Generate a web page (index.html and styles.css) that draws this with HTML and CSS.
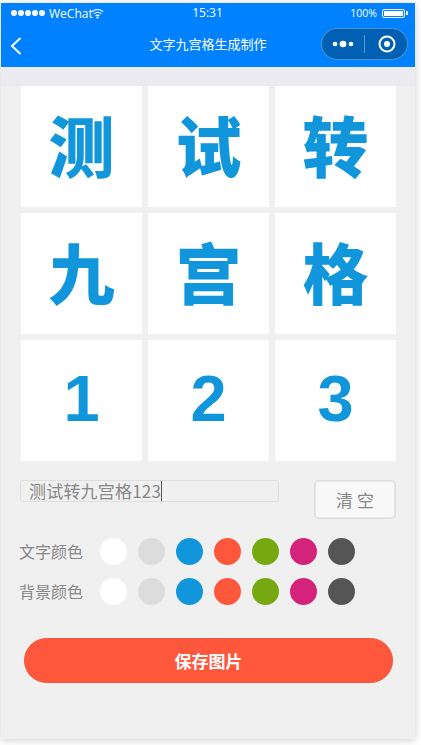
FILE: index.html
```html
<!DOCTYPE html>
<html lang="zh">
<head>
<meta charset="utf-8">
<title>文字九宫格生成制作</title>
<link rel="stylesheet" href="styles.css">
</head>
<body>
<div class="phone">
  <header class="header">
    <div class="status">
      <div class="status-left">
        <span class="dots"><i></i><i></i><i></i><i></i><i></i></span>
        <span class="carrier">WeChat</span>
        <svg class="wifi" width="11" height="9" viewBox="0 0 11 9"><path d="M.6 3Q5.500-1 10.400 3M2.200 4.800Q5.500 2 8.800 4.800M3.800 6.500Q5.500 5.200 7.200 6.500" fill="none" stroke="#fff" stroke-width="1"/><circle cx="5.500" cy="8" r="1" fill="#fff"/></svg>
      </div>
      <div class="time">15:31</div>
      <div class="status-right">
        <span class="pct">100%</span>
        <span class="battery"><span class="battery-fill"></span></span>
        <span class="battery-tip"></span>
      </div>
    </div>
    <div class="nav">
      <svg class="back" width="12" height="18" viewBox="0 0 12 18"><path d="M10.500 1L2 9l8.500 8" fill="none" stroke="#fff" stroke-width="2"/></svg>
      <div class="title">文字九宫格生成制作</div>
      <div class="capsule">
        <svg width="22" height="8" viewBox="0 0 22 8"><circle cx="3" cy="4" r="2.300" fill="#fff"/><circle cx="11" cy="4" r="3.300" fill="#fff"/><circle cx="19" cy="4" r="2.300" fill="#fff"/></svg>
        <span class="capsule-line"></span>
        <svg width="18" height="18" viewBox="0 0 18 18"><circle cx="9" cy="9" r="7.500" fill="none" stroke="#fff" stroke-width="2"/><circle cx="9" cy="9" r="3" fill="#fff"/></svg>
      </div>
    </div>
  </header>
  <div class="band"></div>
  <main class="main">
    <div class="grid">
      <div class="cell cjk">测</div><div class="cell cjk">试</div><div class="cell cjk">转</div>
      <div class="cell cjk">九</div><div class="cell cjk">宫</div><div class="cell cjk">格</div>
      <div class="cell">1</div><div class="cell">2</div><div class="cell">3</div>
    </div>
    <div class="input-row">
      <div class="input"><span>测试转九宫格123</span><span class="caret"></span></div>
      <div class="clear">清 空</div>
    </div>
    <div class="color-row">
      <span class="label">文字颜色</span>
      <span class="swatch white"></span><span class="swatch grey"></span><span class="swatch blue"></span><span class="swatch red"></span><span class="swatch green"></span><span class="swatch pink"></span><span class="swatch dark"></span>
    </div>
    <div class="color-row second">
      <span class="label">背景颜色</span>
      <span class="swatch white"></span><span class="swatch grey"></span><span class="swatch blue"></span><span class="swatch red"></span><span class="swatch green"></span><span class="swatch pink"></span><span class="swatch dark"></span>
    </div>
    <div class="save">保存图片</div>
  </main>
</div>
</body>
</html>
```
FILE: styles.css
```css
* { box-sizing: border-box; }
html, body { margin: 0; height: 100%; background: #fff; overflow: hidden; }
body {
  padding: 3px 0 0 1px;
  font-family: "Liberation Sans", "Noto Sans CJK SC", sans-serif;
}
.phone {
  width: 414px;
  height: 736px;
  display: flex;
  flex-direction: column;
  background: #f0f0f0;
  box-shadow: 0 1px 8px rgba(0, 0, 0, .2);
}
.header { height: 64px; background: #0081ff; color: #fff; flex: none; }
.status {
  height: 20px;
  padding: 0 7px 0 10px;
  display: grid;
  grid-template-columns: 1fr auto 1fr;
  align-items: center;
  font-size: 12px;
}
.status-left { display: flex; align-items: center; }
.dots { display: flex; gap: 1px; margin-right: 4px; }
.dots i { width: 6px; height: 6px; border-radius: 50%; background: #fff; display: block; }
.carrier { font-size: 12px; font-family: "Open Sans", sans-serif; }
.wifi { margin-left: -1px; transform: scale(1.15); }
.time { font-size: 12px; font-family: "Open Sans", sans-serif; margin: -1px 4px 0 0; }
.status-right { display: flex; align-items: center; justify-content: flex-end; }
.pct { font-size: 10.500px; font-family: "Open Sans", sans-serif; margin-right: 5px; }
.battery { width: 23px; height: 9px; border: 1px solid #fff; border-radius: 2px; padding: 1px; display: block; }
.battery-fill { display: block; height: 100%; background: #fff; }
.battery-tip { width: 2px; height: 4px; margin-left: 1px; background: #fff; border-radius: 0 1px 1px 0; }
.nav {
  height: 44px;
  position: relative;
  display: flex;
  align-items: center;
  justify-content: space-between;
  padding: 0 7px 0 9px;
}
.back { margin-top: 1px; }
.title {
  position: absolute;
  left: 0;
  right: 0;
  text-align: center;
  font-family: "Noto Sans CJK SC", sans-serif;
  font-size: 13px;
  line-height: 20px;
  margin-top: -2px;
}
.capsule {
  width: 87px;
  height: 32px;
  margin-top: -3px;
  border-radius: 16px;
  background: #0060b4;
  border: 1px solid rgba(255, 255, 255, .3);
  display: flex;
  align-items: center;
  padding-left: 10px;
  position: relative;
  z-index: 1;
}
.capsule-line { width: 1px; height: 18px; background: rgba(255, 255, 255, .35); margin: 0 13px 0 10px; }
.band { height: 19px; background: #ebebef; flex: none; }
.main { flex: 1; padding: 0 19px 0 20px; background: #f0f0f0; }
.grid { display: grid; grid-template-columns: repeat(3, 121px); grid-auto-rows: 121px; gap: 6px; }
.cell {
  background: #fff;
  color: #1296db;
  font-size: 65px;
  font-weight: 700;
  padding-bottom: 5px;
  display: flex;
  align-items: center;
  justify-content: center;
}
.cjk {
  font-family: "Noto Sans CJK SC", sans-serif;
  font-size: 66px;
  font-weight: 900;
  padding-bottom: 8px;
}
.input-row { display: flex; justify-content: space-between; align-items: flex-start; margin: 19px 0 0 -1px; }
.input {
  width: 259px;
  height: 22px;
  border: 1px solid #dedede;
  border-radius: 3px;
  padding-left: 8px;
  font-size: 17px;
  letter-spacing: .2px;
  line-height: 20px;
  color: #888;
  display: flex;
  font-family: "Noto Sans CJK SC", sans-serif;
}
.caret { width: 1px; height: 20px; background: #555; }
.clear {
  width: 82px;
  height: 39px;
  border: 1px solid #ddd;
  box-shadow: inset 0 0 0 1px #e6e6e6;
  border-radius: 5px;
  background: #f8f8f8;
  color: #888;
  font-size: 17px;
  font-family: "Noto Sans CJK SC", sans-serif;
  display: flex;
  align-items: center;
  justify-content: center;
}
.color-row { display: flex; align-items: center; height: 27px; margin: 19px 0 0 -1px; }
.color-row.second { margin-top: 13px; }
.label {
  width: 81px;
  margin-left: -1px;
  font-size: 16px;
  line-height: 24px;
  padding-bottom: 2px;
  color: #888;
  font-family: "Noto Sans CJK SC", sans-serif;
}
.swatch { width: 27px; height: 27px; border-radius: 50%; margin-right: 11px; flex: none; }
.white { background: #fff; }
.grey { background: #dcdcdc; }
.blue { background: #1296db; }
.red { background: #ff573c; }
.green { background: #76a90f; }
.pink { background: #d4237a; }
.dark { background: #555; }
.save {
  width: 369px;
  height: 45px;
  margin: 33px 0 0 3px;
  border-radius: 23px;
  background: #ff573c;
  border: 1px solid #f3563c;
  color: #fff;
  font-size: 17px;
  font-weight: 700;
  font-family: "Noto Sans CJK SC", sans-serif;
  display: flex;
  align-items: center;
  justify-content: center;
}
```
